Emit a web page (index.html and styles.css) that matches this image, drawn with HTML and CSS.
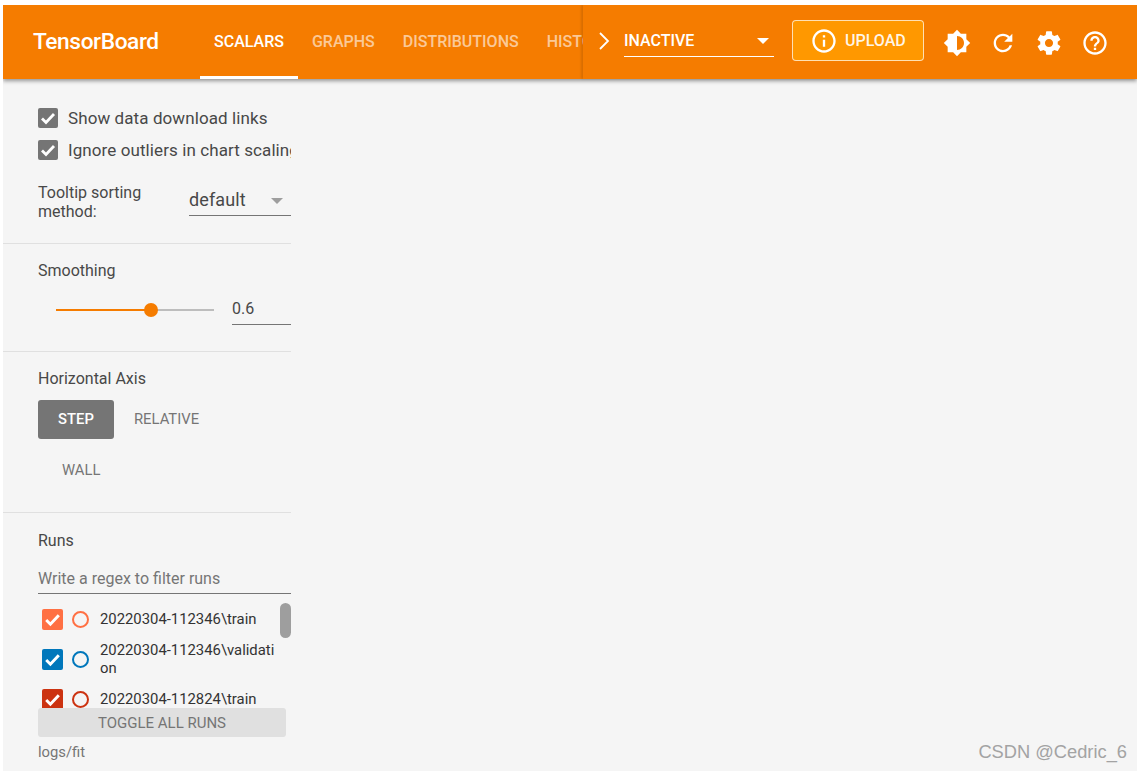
FILE: index.html
```html
<!DOCTYPE html>
<html>
<head>
    <title>TensorBoard</title>
    <link rel="stylesheet" href="styles.css">
</head>
<body>
    <div class="app">
        <header class="toolbar">
            <div class="logo">TensorBoard</div>
            <nav class="tabs">
                <a class="tab active">SCALARS</a>
                <a class="tab">GRAPHS</a>
                <a class="tab">DISTRIBUTIONS</a>
                <a class="tab">HISTOGRAMS</a>
            </nav>
            <div class="toolbar-right">
                <svg class="chevron" viewBox="0 0 12 20"><path d="M2 2l8 8-8 8" fill="none" stroke="#fff" stroke-width="1.8"/></svg>
                <div class="plugin-select">
                    <span>INACTIVE</span>
                    <i class="caret-white"></i>
                </div>
                <button class="upload" type="button">
                    <svg viewBox="0 0 24 24"><path d="M11 17h2v-6h-2v6zm1-15C6.48 2 2 6.48 2 12s4.48 10 10 10 10-4.48 10-10S17.52 2 12 2zm0 18c-4.41 0-8-3.59-8-8s3.59-8 8-8 8 3.59 8 8-3.59 8-8 8zM11 9h2V7h-2v2z"/></svg>
                    UPLOAD
                </button>
                <div class="icons">
                    <svg viewBox="0 0 24 24"><path d="M20 15.31L23.31 12 20 8.69V4h-4.69L12 .69 8.69 4H4v4.69L.69 12 4 15.31V20h4.69L12 23.31 15.31 20H20v-4.69zM12 18V6c3.31 0 6 2.69 6 6s-2.69 6-6 6z"/></svg>
                    <svg viewBox="0 0 24 24"><path d="M17.65 6.35C16.2 4.9 14.21 4 12 4c-4.42 0-7.99 3.58-7.99 8s3.57 8 7.99 8c3.73 0 6.84-2.55 7.73-6h-2.08c-.82 2.33-3.04 4-5.65 4-3.31 0-6-2.69-6-6s2.69-6 6-6c1.66 0 3.14.69 4.22 1.78L13 11h7V4l-2.35 2.35z"/></svg>
                    <svg viewBox="0 0 24 24"><path d="M19.43 12.98c.04-.32.07-.64.07-.98s-.03-.66-.07-.98l2.11-1.65c.19-.15.24-.42.12-.64l-2-3.46c-.12-.22-.39-.3-.61-.22l-2.49 1c-.52-.4-1.08-.73-1.69-.98l-.38-2.65C14.46 2.18 14.25 2 14 2h-4c-.25 0-.46.18-.49.42l-.38 2.65c-.61.25-1.17.59-1.69.98l-2.49-1c-.23-.09-.49 0-.61.22l-2 3.46c-.13.22-.07.49.12.64l2.11 1.65c-.04.32-.07.65-.07.98s.03.66.07.98l-2.11 1.65c-.19.15-.24.42-.12.64l2 3.46c.12.22.39.3.61.22l2.49-1c.52.4 1.08.73 1.69.98l.38 2.65c.03.24.24.42.49.42h4c.25 0 .46-.18.49-.42l.38-2.65c.61-.25 1.17-.59 1.69-.98l2.49 1c.23.09.49 0 .61-.22l2-3.46c.12-.22.07-.49-.12-.64l-2.11-1.65zM12 15.5c-1.93 0-3.5-1.57-3.5-3.5s1.57-3.5 3.5-3.5 3.5 1.57 3.5 3.5-1.57 3.5-3.5 3.5z"/></svg>
                    <svg viewBox="0 0 24 24"><path d="M11 18h2v-2h-2v2zm1-16C6.48 2 2 6.48 2 12s4.48 10 10 10 10-4.48 10-10S17.52 2 12 2zm0 18c-4.41 0-8-3.59-8-8s3.59-8 8-8 8 3.59 8 8-3.59 8-8 8zm0-14c-2.21 0-4 1.79-4 4h2c0-1.1.9-2 2-2s2 .9 2 2c0 2-3 1.75-3 5h2c0-2.25 3-2.5 3-5 0-2.21-1.79-4-4-4z"/></svg>
                </div>
            </div>
        </header>

        <aside class="sidebar">
            <section class="section options">
                <label class="check-row">
                    <span class="box grey"><svg viewBox="0 0 20 20"><path d="M4 10.5l4 4 8-8.5"/></svg></span>
                    Show data download links
                </label>
                <label class="check-row clipped">
                    <span class="box grey"><svg viewBox="0 0 20 20"><path d="M4 10.5l4 4 8-8.5"/></svg></span>
                    Ignore outliers in chart scaling
                </label>
                <div class="tooltip-row">
                    <div class="tooltip-label">Tooltip sorting method:</div>
                    <div class="sort-select">
                        <span>default</span>
                        <i class="caret-grey"></i>
                    </div>
                </div>
            </section>

            <section class="section smoothing">
                <div class="title">Smoothing</div>
                <div class="slider-row">
                    <div class="slider">
                        <div class="slider-fill"></div>
                        <div class="slider-thumb"></div>
                    </div>
                    <div class="slider-value">0.6</div>
                </div>
            </section>

            <section class="section axis">
                <div class="title">Horizontal Axis</div>
                <div class="axis-buttons">
                    <button class="axis-btn selected" type="button">STEP</button>
                    <button class="axis-btn" type="button">RELATIVE</button>
                    <button class="axis-btn wall" type="button">WALL</button>
                </div>
            </section>

            <section class="runs">
                <div class="title">Runs</div>
                <div class="filter">Write a regex to filter runs</div>
                <div class="run-list">
                    <div class="run">
                        <span class="box orange"><svg viewBox="0 0 20 20"><path d="M4 10.5l4 4 8-8.5"/></svg></span>
                        <span class="dot dot-orange"></span>
                        <span class="run-name">20220304-112346\train</span>
                    </div>
                    <div class="run">
                        <span class="box blue"><svg viewBox="0 0 20 20"><path d="M4 10.5l4 4 8-8.5"/></svg></span>
                        <span class="dot dot-blue"></span>
                        <span class="run-name">20220304-112346\validation</span>
                    </div>
                    <div class="run">
                        <span class="box red"><svg viewBox="0 0 20 20"><path d="M4 10.5l4 4 8-8.5"/></svg></span>
                        <span class="dot dot-red"></span>
                        <span class="run-name">20220304-112824\train</span>
                    </div>
                    <div class="scroll-thumb"></div>
                </div>
                <button class="toggle-all" type="button">TOGGLE ALL RUNS</button>
                <div class="logdir">logs/fit</div>
            </section>
        </aside>

        <div class="watermark">CSDN @Cedric_6</div>
    </div>
</body>
</html>
```

FILE: styles.css
```css
* {
    box-sizing: border-box;
}

html, body {
    height: 100%;
    margin: 0;
    background-color: #fff;
    overflow: hidden;
}

body {
    font-family: Roboto, "Liberation Sans", sans-serif;
    padding: 5px 5px 0 3px;
}

.app {
    position: relative;
    height: 100%;
    overflow: hidden;
    background-color: #f5f5f5;
    color: #484848;
}

/* Top bar */
.toolbar {
    display: flex;
    align-items: stretch;
    height: 74px;
    background-color: #f57c00;
    color: #fff;
    box-shadow: 0 2px 4px rgba(0, 0, 0, 0.4);
}

.logo {
    width: 197px;
    padding: 23px 0 0 30px;
    font-size: 22.7px;
    font-weight: 500;
    letter-spacing: -0.4px;
}

.tabs {
    display: flex;
    width: 383px;
    overflow: hidden;
}

.tab {
    flex: none;
    padding: 27px 14px 0;
    font-size: 16px;
    font-weight: 500;
    color: rgba(255, 255, 255, 0.6);
    border-bottom: 3px solid transparent;
}

.tab.active {
    color: #fff;
    border-bottom-color: #fff;
}

.toolbar-right {
    flex: 1;
    display: flex;
    align-items: flex-start;
    box-shadow: -2px 0 2px rgba(0, 0, 0, 0.12);
    background-color: #f57c00;
}

.chevron {
    width: 12px;
    height: 20px;
    margin: 26px 0 0 15px;
}

.plugin-select {
    position: relative;
    width: 150px;
    height: 37px;
    margin: 15px 0 0 14px;
    padding-top: 11px;
    font-size: 16px;
    font-weight: 500;
    border-bottom: 1px solid #fff;
}

.caret-white {
    position: absolute;
    right: 5px;
    top: 18px;
    border: 6px solid transparent;
    border-bottom: 0;
    border-top-color: #fff;
}

.upload {
    display: flex;
    align-items: center;
    width: 132px;
    height: 41px;
    margin: 15px 0 0 18px;
    padding: 0 0 0 17px;
    background-color: #ff9800;
    border: 1px solid rgba(255, 255, 255, 0.7);
    border-radius: 4px;
    color: rgba(255, 255, 255, 0.92);
    font-family: inherit;
    font-size: 16px;
    font-weight: 500;
}

.upload svg {
    width: 28px;
    height: 28px;
    margin-right: 7px;
    fill: #fff;
}

.icons {
    display: flex;
    gap: 18px;
    margin: 24px 0 0 19px;
}

.icons svg {
    width: 28px;
    height: 28px;
    fill: #fff;
}

/* Left panel */
.sidebar {
    width: 288px;
}

.section {
    padding-left: 35px;
    border-bottom: 1px solid #e0e0e0;
}

.title {
    font-size: 16px;
    line-height: 20px;
}

.options {
    height: 165px;
    padding-top: 28px;
}

.check-row {
    display: flex;
    align-items: center;
    height: 21px;
    margin-bottom: 11px;
    font-size: 17px;
    letter-spacing: 0.09px;
    white-space: nowrap;
    overflow: hidden;
}

.box {
    flex: none;
    display: inline-block;
    width: 20px;
    height: 20px;
    border-radius: 2px;
}

.box svg {
    display: block;
    fill: none;
    stroke: #fff;
    stroke-width: 2.8;
}

.check-row .box {
    margin-right: 10px;
}

.grey {
    background-color: #757575;
}

.orange {
    background-color: #ff7043;
}

.blue {
    background-color: #0077bb;
}

.red {
    background-color: #cc3311;
}

.tooltip-row {
    display: flex;
    margin-top: 12px;
}

.tooltip-label {
    width: 151px;
    padding-top: 11px;
    padding-right: 30px;
    font-size: 16px;
    line-height: 19px;
}

.sort-select {
    position: relative;
    width: 102px;
    height: 37px;
    margin-top: 7px;
    padding-top: 10px;
    font-size: 18px;
    letter-spacing: 0.1px;
    border-bottom: 1px solid #757575;
}

.caret-grey {
    position: absolute;
    right: 8px;
    top: 19px;
    border: 6px solid transparent;
    border-bottom: 0;
    border-top-color: #9e9e9e;
}

.smoothing {
    height: 108px;
    padding-top: 17px;
}

.slider-row {
    display: flex;
    margin-top: 18px;
}

.slider {
    position: relative;
    width: 158px;
    height: 2px;
    margin: 10px 18px 0 18px;
    background-color: #bdbdbd;
}

.slider-fill {
    width: 60%;
    height: 2px;
    background-color: #f57c00;
}

.slider-thumb {
    position: absolute;
    left: 88px;
    top: -6px;
    width: 14px;
    height: 14px;
    border-radius: 50%;
    background-color: #f57c00;
}

.slider-value {
    width: 59px;
    height: 26px;
    font-size: 16px;
    border-bottom: 1px solid #757575;
}

.axis {
    height: 161px;
    padding-top: 17px;
}

.axis-buttons {
    display: flex;
    flex-wrap: wrap;
    margin-top: 11px;
}

.axis-btn {
    height: 39px;
    padding: 0 20px 2px;
    background: none;
    border: 0;
    border-radius: 3px;
    color: #757575;
    font-family: inherit;
    font-size: 14.8px;
}

.axis-btn.selected {
    width: 76px;
    padding: 0 0 2px;
    background-color: #757575;
    color: #fff;
    font-weight: 500;
}

.axis-btn.wall {
    margin: 12px 0 0 4px;
}

.runs {
    padding: 18px 0 0 35px;
}

.filter {
    height: 25px;
    margin-top: 18px;
    font-size: 16px;
    color: #757575;
    border-bottom: 1px solid #757575;
}

.run-list {
    position: relative;
    height: 114px;
    padding: 15px 0 0 4px;
    overflow: hidden;
}

.run {
    display: flex;
    align-items: center;
    margin-bottom: 11px;
}

.run .box {
    width: 21px;
    height: 21px;
}

.dot {
    flex: none;
    width: 17px;
    height: 17px;
    margin: 0 11px 0 9px;
    border-radius: 50%;
    border: 2px solid;
}

.dot-orange {
    border-color: #ff7043;
}

.dot-blue {
    border-color: #0077bb;
}

.dot-red {
    border-color: #cc3311;
}

.run-name {
    width: 176px;
    margin-bottom: 1px;
    font-size: 14.85px;
    line-height: 18px;
    color: #333;
    word-break: break-all;
}

.scroll-thumb {
    position: absolute;
    right: 0;
    top: 9px;
    width: 11px;
    height: 35px;
    border-radius: 6px;
    background-color: #9e9e9e;
}

.toggle-all {
    display: block;
    width: 248px;
    height: 29px;
    background-color: #e0e0e0;
    border: 0;
    border-radius: 3px;
    color: #757575;
    font-family: inherit;
    font-size: 15px;
}

.logdir {
    margin-top: 6px;
    font-size: 14.8px;
    color: #757575;
}

/* Sits over the page corner */
.watermark {
    position: absolute;
    right: 10px;
    bottom: 8px;
    font-family: "Liberation Sans", sans-serif;
    font-size: 18.3px;
    color: #a3a3a3;
}
```
